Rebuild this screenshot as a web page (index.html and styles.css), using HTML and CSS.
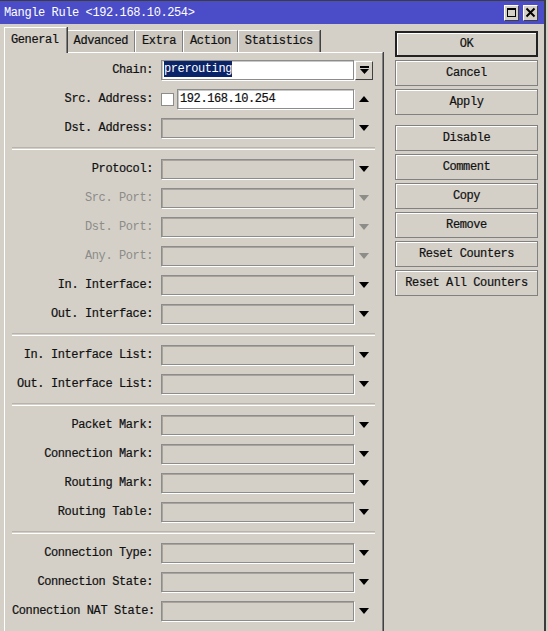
FILE: index.html
```html
<html>
  <head>
    <title>Mangle Rule</title>
    <link rel="stylesheet" href="styles.css">
  </head>
  <body>
    <div class="window">
      <div class="titlebar">
        <span class="title">Mangle Rule &lt;192.168.10.254&gt;</span>
        <span class="tbtn max"><i></i></span>
        <span class="tbtn close">
          <svg width="11" height="11" viewBox="0 0 11 11"><path d="M1.5 1.5 L9.5 9.5 M9.5 1.5 L1.5 9.5" stroke="#000" stroke-width="2"/></svg>
        </span>
      </div>

      <div class="content">
        <div class="left">
          <div class="tabs">
            <div class="tab active">General</div>
            <div class="tab">Advanced</div>
            <div class="tab">Extra</div>
            <div class="tab">Action</div>
            <div class="tab">Statistics</div>
          </div>

          <div class="panel">
            <div class="section">
              <div class="row">
                <label>Chain:</label>
                <div class="field on"><span class="sel">prerouting</span></div>
                <span class="combo"><svg width="9" height="9" viewBox="0 0 9 9"><rect x="0" y="0" width="9" height="2" fill="#000"/><path d="M0 3 H9 L4.5 8 Z" fill="#000"/></svg></span>
              </div>
              <div class="row">
                <label>Src. Address:</label>
                <div class="cell">
                  <span class="check"></span>
                  <div class="field on wide">192.168.10.254</div>
                </div>
                <span class="arrow up"></span>
              </div>
              <div class="row">
                <label>Dst. Address:</label>
                <div class="field"></div>
                <span class="arrow"></span>
              </div>
            </div>

            <div class="sep"></div>

            <div class="section">
              <div class="row">
                <label>Protocol:</label>
                <div class="field"></div>
                <span class="arrow"></span>
              </div>
              <div class="row off">
                <label>Src. Port:</label>
                <div class="field"></div>
                <span class="arrow"></span>
              </div>
              <div class="row off">
                <label>Dst. Port:</label>
                <div class="field"></div>
                <span class="arrow"></span>
              </div>
              <div class="row off">
                <label>Any. Port:</label>
                <div class="field"></div>
                <span class="arrow"></span>
              </div>
              <div class="row">
                <label>In. Interface:</label>
                <div class="field"></div>
                <span class="arrow"></span>
              </div>
              <div class="row">
                <label>Out. Interface:</label>
                <div class="field"></div>
                <span class="arrow"></span>
              </div>
            </div>

            <div class="sep"></div>

            <div class="section">
              <div class="row">
                <label>In. Interface List:</label>
                <div class="field"></div>
                <span class="arrow"></span>
              </div>
              <div class="row">
                <label>Out. Interface List:</label>
                <div class="field"></div>
                <span class="arrow"></span>
              </div>
            </div>

            <div class="sep"></div>

            <div class="section">
              <div class="row">
                <label>Packet Mark:</label>
                <div class="field"></div>
                <span class="arrow"></span>
              </div>
              <div class="row">
                <label>Connection Mark:</label>
                <div class="field"></div>
                <span class="arrow"></span>
              </div>
              <div class="row">
                <label>Routing Mark:</label>
                <div class="field"></div>
                <span class="arrow"></span>
              </div>
              <div class="row">
                <label>Routing Table:</label>
                <div class="field"></div>
                <span class="arrow"></span>
              </div>
            </div>

            <div class="sep"></div>

            <div class="section">
              <div class="row">
                <label>Connection Type:</label>
                <div class="field"></div>
                <span class="arrow"></span>
              </div>
              <div class="row">
                <label>Connection State:</label>
                <div class="field"></div>
                <span class="arrow"></span>
              </div>
              <div class="row">
                <label>Connection NAT State:</label>
                <div class="field"></div>
                <span class="arrow"></span>
              </div>
            </div>
          </div>
        </div>

        <div class="buttons">
          <div class="btn default">OK</div>
          <div class="btn">Cancel</div>
          <div class="btn">Apply</div>
          <div class="btn spaced">Disable</div>
          <div class="btn">Comment</div>
          <div class="btn">Copy</div>
          <div class="btn">Remove</div>
          <div class="btn">Reset Counters</div>
          <div class="btn">Reset All Counters</div>
        </div>
      </div>
    </div>
  </body>
</html>
```

FILE: styles.css
```css
body {
  margin: 0;
  background: #d4d0c8;
  overflow: hidden;
}
.window {
  width: 546px;
  height: 631px;
  background: #d4d0c8;
  border-top: 1px solid #3c3c3c;
  border-right: 2px solid #3c3c3c;
  font-family: "Liberation Mono", monospace;
  font-size: 12px;
  letter-spacing: -0.4px;
  color: #111;
  -webkit-text-stroke: 0.2px #111;
  white-space: nowrap;
  box-sizing: border-box;
}

/* title bar */
.titlebar {
  height: 23px;
  background: #4b4dc8;
  color: #fff;
  -webkit-text-stroke: 0;
  display: flex;
  align-items: center;
  padding-left: 4px;
  padding-right: 6px;
}
.title { flex: 1; }
.tbtn {
  width: 13px;
  height: 14px;
  background: #d4d0c8;
  border: 1px solid #fff;
  border-right-color: #404040;
  border-bottom-color: #404040;
  margin-left: 4px;
  display: flex;
  align-items: center;
  justify-content: center;
}
.max i {
  display: block;
  width: 7px;
  height: 6px;
  border: 1px solid #000;
  border-top-width: 2px;
}

.content {
  display: flex;
  padding: 3px 0 0 4px;
}
.left { width: 379px; }

/* tabs */
.tabs {
  display: flex;
  align-items: flex-end;
  height: 25px;
}
.tab {
  height: 21px;
  line-height: 21px;
  padding: 0 6px;
  border-top: 1px solid #fff;
  border-left: 1px solid #fff;
  border-right: 1px solid #808080;
  box-shadow: 1px 0 0 #404040;
  background: #ccc8c0;
}
.tab.active {
  height: 25px;
  line-height: 24px;
  padding: 0 7px 0 6px;
  background: #d4d0c8;
  position: relative;
  z-index: 1;
  margin-bottom: -1px;
}

/* panel with the form rows */
.panel {
  height: 600px;
  border-top: 1px solid #fff;
  border-left: 1px solid #fff;
  border-right: 1px solid #808080;
  box-shadow: 1px 0 0 #404040;
  padding: 7px 0 0 7px;
  box-sizing: border-box;
}
.section {
  display: flex;
  flex-direction: column;
  gap: 9px;
}
.sep {
  height: 1px;
  margin: 9px 7px 9px 0;
  border-top: 1px solid #b8b4ac;
  border-bottom: 1px solid #fff;
  width: 363px;
}
.row {
  display: flex;
  align-items: center;
  height: 20px;
}
.row label {
  width: 141px;
  margin-right: 8px;
  text-align: right;
}
.row.off label {
  color: #8c8c88;
  -webkit-text-stroke: 0;
}

.field {
  width: 193px;
  height: 20px;
  box-sizing: border-box;
  border: 1px solid #8c8c8c;
  box-shadow: inset 1px 1px 0 #a8a49c, 1px 1px 0 #fff;
  background: #d4d0c8;
  line-height: 18px;
  padding-left: 2px;
}
.field.on {
  background: #fff;
  box-shadow: inset 1px 1px 0 #c8c8c8, 1px 1px 0 #fff;
}
.field.wide { width: 177px; }
.sel {
  background: #0a246a;
  color: #fff;
  -webkit-text-stroke: 0;
  display: inline-block;
  line-height: 16px;
}

.cell {
  display: flex;
  align-items: center;
  gap: 3px;
}
.check {
  width: 13px;
  height: 13px;
  box-sizing: border-box;
  background: #fff;
  border: 1px solid #8c8c8c;
}

.combo {
  width: 16px;
  height: 17px;
  margin-left: 1px;
  border: 1px solid #fff;
  border-right-color: #404040;
  border-bottom-color: #404040;
  display: flex;
  align-items: center;
  justify-content: center;
}
.arrow {
  width: 0;
  height: 0;
  margin-left: 5px;
  border-left: 5.5px solid transparent;
  border-right: 5.5px solid transparent;
  border-top: 6px solid #000;
}
.arrow.up {
  border-top: 0;
  border-bottom: 6px solid #000;
}
.row.off .arrow { border-top-color: #8c8c88; }

/* command buttons */
.buttons {
  margin-left: 12px;
  margin-top: 4px;
  width: 143px;
  display: flex;
  flex-direction: column;
  gap: 3px;
}
.btn {
  height: 26px;
  box-sizing: border-box;
  border: 1px solid #808080;
  box-shadow: inset 1px 1px 0 #fff;
  text-align: center;
  line-height: 24px;
}
.btn.default {
  border: 2px solid #222;
  line-height: 22px;
}
.btn.spaced { margin-top: 7px; }
```
